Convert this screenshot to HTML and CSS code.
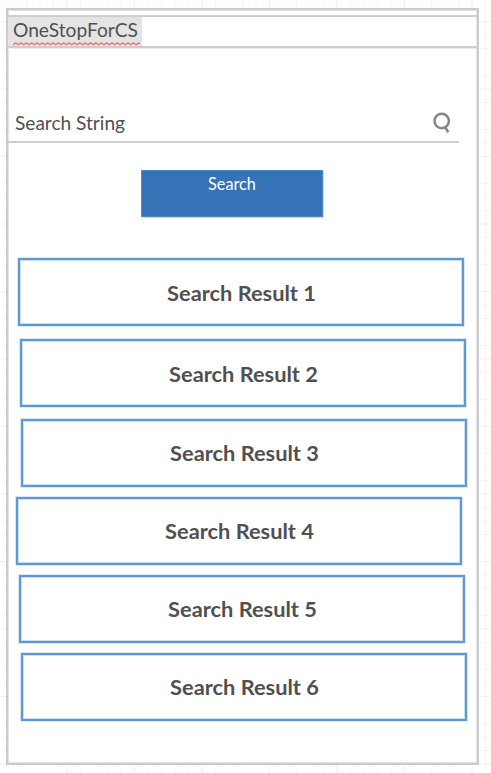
FILE: index.html
```
<!DOCTYPE html>
<html lang="en">
<head>
<meta charset="utf-8">
<title>OneStopForCS</title>
<link rel="stylesheet" href="styles.css">
</head>
<body>
<main class="frame">
  <header class="header">
    <h1 class="brand"><span class="brand-name">OneStopForCS</span>
      <svg class="squiggle" width="127" height="4" viewBox="0 0 127 4"><defs><pattern id="wave" width="5.35" height="4" patternUnits="userSpaceOnUse"><path d="M-.3 3.1L2.6 .8L5.65 3.1" fill="none" stroke="#f06a6a" stroke-width="1.2"/></pattern></defs><rect width="127" height="4" fill="url(#wave)"/></svg>
    </h1>
  </header>
  <div class="search-field">
    <span>Search String</span>
    <svg class="search-icon" width="18" height="22" viewBox="0 0 18 22" fill="none" stroke="#858585" stroke-width="2.5"><circle cx="8.7" cy="9" r="7.2"/><path d="M11.7 14.8L15.4 20.2"/></svg>
  </div>
  <div class="search-button">Search</div>
  <section class="results">
    <div class="result r1">Search Result 1</div>
    <div class="result r2">Search Result 2</div>
    <div class="result r3">Search Result 3</div>
    <div class="result r4">Search Result 4</div>
    <div class="result r5">Search Result 5</div>
    <div class="result r6">Search Result 6</div>
  </section>
</main>
</body>
</html>
```
FILE: styles.css
```
* { box-sizing: border-box; }
body {
  margin: 0;
  height: 773px;
  padding: 8px 0 0 6px;
  overflow: hidden;
  font-family: Lato, sans-serif;
  color: #505050;
  background-color: #fff;
  background-image:
    linear-gradient(#f1f1f1 1px, transparent 1px),
    linear-gradient(90deg, #f1f1f1 1px, transparent 1px),
    linear-gradient(#f6f6f6 1px, transparent 1px),
    linear-gradient(90deg, #f6f6f6 1px, transparent 1px);
  background-size: 67.5px 67.5px, 67.5px 67.5px, 13.5px 13.5px, 13.5px 13.5px;
  background-position: 0 21px, -1px 0, 0 7.5px, -1px 0;
}
.frame {
  width: 473px;
  height: 757px;
  border: 2px solid #cbcbcb;
  background: #fff;
  box-shadow: inset 0 0 0 1px #e4e4e4;
}
.header {
  height: 33px;
  margin-top: 5px;
  border: solid #cecece;
  border-width: 2px 0;
  box-shadow: 0 1px #ededed;
}
.brand {
  display: flex;
  flex-direction: column;
  width: 134px;
  height: 29px;
  margin: 0;
  padding: 0 0 0 5px;
  background: #e4e4e4;
  font-size: 19.2px;
  line-height: 25px;
  font-weight: 400;
}
.brand-name { height: 25px; white-space: nowrap; }
.search-field {
  display: flex;
  justify-content: space-between;
  width: 451px;
  height: 42px;
  margin-top: 53px;
  padding: 0 8px 0 7px;
  border-bottom: 2px solid #cecece;
  font-size: 19.1px;
  line-height: 44px;
}
.search-icon { margin-top: 11px; }
.search-button {
  width: 182px;
  height: 47px;
  margin: 27px 0 0 133px;
  border: 1px solid #5089c4;
  background: #3572b6;
  box-shadow: 1px 1px #c5d9ed;
  color: #fff;
  font-size: 16.3px;
  line-height: 25px;
  text-align: center;
}
.results { margin-top: 41px; }
.result {
  width: 446px;
  height: 68px;
  padding-left: 1px;
  border: 2px solid #5f99d2;
  box-shadow: 0 0 0 .5px #b7d2ec, inset 0 0 0 1px #c9def1;
  font-size: 21.8px;
  font-weight: 700;
  line-height: 64px;
  text-align: center;
}
.r1 { margin-left: 10px; line-height: 66px; }
.r2 { margin: 13px 0 0 12px; line-height: 66px; }
.r3 { margin: 12px 0 0 13px; }
.r4 { margin: 10px 0 0 8px; }
.r5 { margin: 10px 0 0 11px; }
.r6 { margin: 10px 0 0 13px; }
```
